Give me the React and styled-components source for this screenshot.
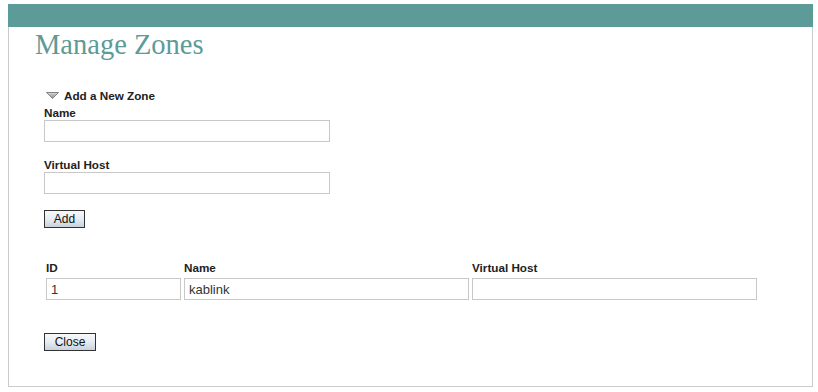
import React from "react";
import styled, { createGlobalStyle } from "styled-components";

const Global = createGlobalStyle`
  html, body { margin: 0; padding: 0; background: #fff; }
  body { padding: 4px 0 0 8px; font-family: "Liberation Sans", Arial, sans-serif; color: #333; }
`;

const Frame = styled.div`
  width: 805px;
  display: flex;
  flex-direction: column;
`;

const TopBar = styled.div`
  height: 23px;
  background: #5c9b98;
`;

const Body = styled.div`
  border: 1px solid #cbcbcb;
  border-top: none;
  padding: 2px 0 35px 0;
  display: flex;
  flex-direction: column;
`;

const Title = styled.h1`
  margin: 0;
  padding-left: 26px;
  font-family: "Liberation Serif", "Times New Roman", serif;
  font-weight: normal;
  font-size: 28.5px;
  line-height: 32px;
  color: #5c9b98;
`;

const Content = styled.div`
  padding-left: 35px;
  display: flex;
  flex-direction: column;
  align-items: flex-start;
`;

const SectionToggle = styled.div`
  margin-top: 28px;
  padding-left: 2px;
  display: flex;
  align-items: center;
  gap: 5px;
  font-size: 11.7px;
  font-weight: bold;
  line-height: 13px;
  color: #222;
`;

const Label = styled.label`
  display: block;
  margin-top: ${(p) => p.$top}px;
  font-size: 11.7px;
  font-weight: bold;
  line-height: 13px;
  color: #222;
`;

const TextInput = styled.input`
  box-sizing: border-box;
  width: ${(p) => (p.$full ? "100%" : "286px")};
  height: 22px;
  margin: ${(p) => (p.$full ? "0" : "1px 0 0")};
  border: 1px solid #c8c8c8;
  padding: 0 4px;
  font-family: "Liberation Sans", Arial, sans-serif;
  font-size: 13px;
  color: #333;
  background: #fff;
  outline: none;
`;

const Button = styled.button`
  box-sizing: border-box;
  height: 18px;
  width: ${(p) => p.$w}px;
  margin-top: ${(p) => p.$top}px;
  padding: 0;
  border: 1px solid #333;
  background: linear-gradient(#f7f9fc, #e6ecf2 50%, #c8d2dd);
  font-family: "Liberation Sans", Arial, sans-serif;
  font-size: 12px;
  line-height: 16px;
  color: #111;
`;

const Grid = styled.div`
  margin-top: 33px;
  margin-left: 2px;
  display: grid;
  grid-template-columns: 135px 285px 285px;
  column-gap: 3px;
  row-gap: 4px;
`;

const HeadCell = styled.div`
  font-size: 11.7px;
  font-weight: bold;
  line-height: 13px;
  color: #222;
`;

const Triangle = () => (
  <svg width="13" height="7" viewBox="0 0 13 7">
    <defs>
      <linearGradient id="tg" x1="0" y1="0" x2="0" y2="1">
        <stop offset="0" stopColor="#d8d8d8" />
        <stop offset="1" stopColor="#8a8a8a" />
      </linearGradient>
    </defs>
    <path d="M0.5 0.5 L12.5 0.5 L6.5 6.5 Z" fill="url(#tg)" stroke="#858585" strokeWidth="1" strokeLinejoin="round" />
  </svg>
);

const zones = [{ id: "1", name: "kablink", host: "" }];

export default function App() {
  return (
    <>
      <Global />
      <Frame>
        <TopBar />
        <Body>
          <Title>Manage Zones</Title>
          <Content>
            <SectionToggle>
              <Triangle />
              <span>Add a New Zone</span>
            </SectionToggle>
            <Label $top={4}>Name</Label>
            <TextInput />
            <Label $top={16}>Virtual Host</Label>
            <TextInput />
            <Button $w={41} $top={16}>Add</Button>
            <Grid>
              <HeadCell>ID</HeadCell>
              <HeadCell>Name</HeadCell>
              <HeadCell>Virtual Host</HeadCell>
              {zones.map((z) => (
                <React.Fragment key={z.id}>
                  <TextInput $full defaultValue={z.id} />
                  <TextInput $full defaultValue={z.name} />
                  <TextInput $full defaultValue={z.host} />
                </React.Fragment>
              ))}
            </Grid>
            <Button $w={52} $top={33}>Close</Button>
          </Content>
        </Body>
      </Frame>
    </>
  );
}
